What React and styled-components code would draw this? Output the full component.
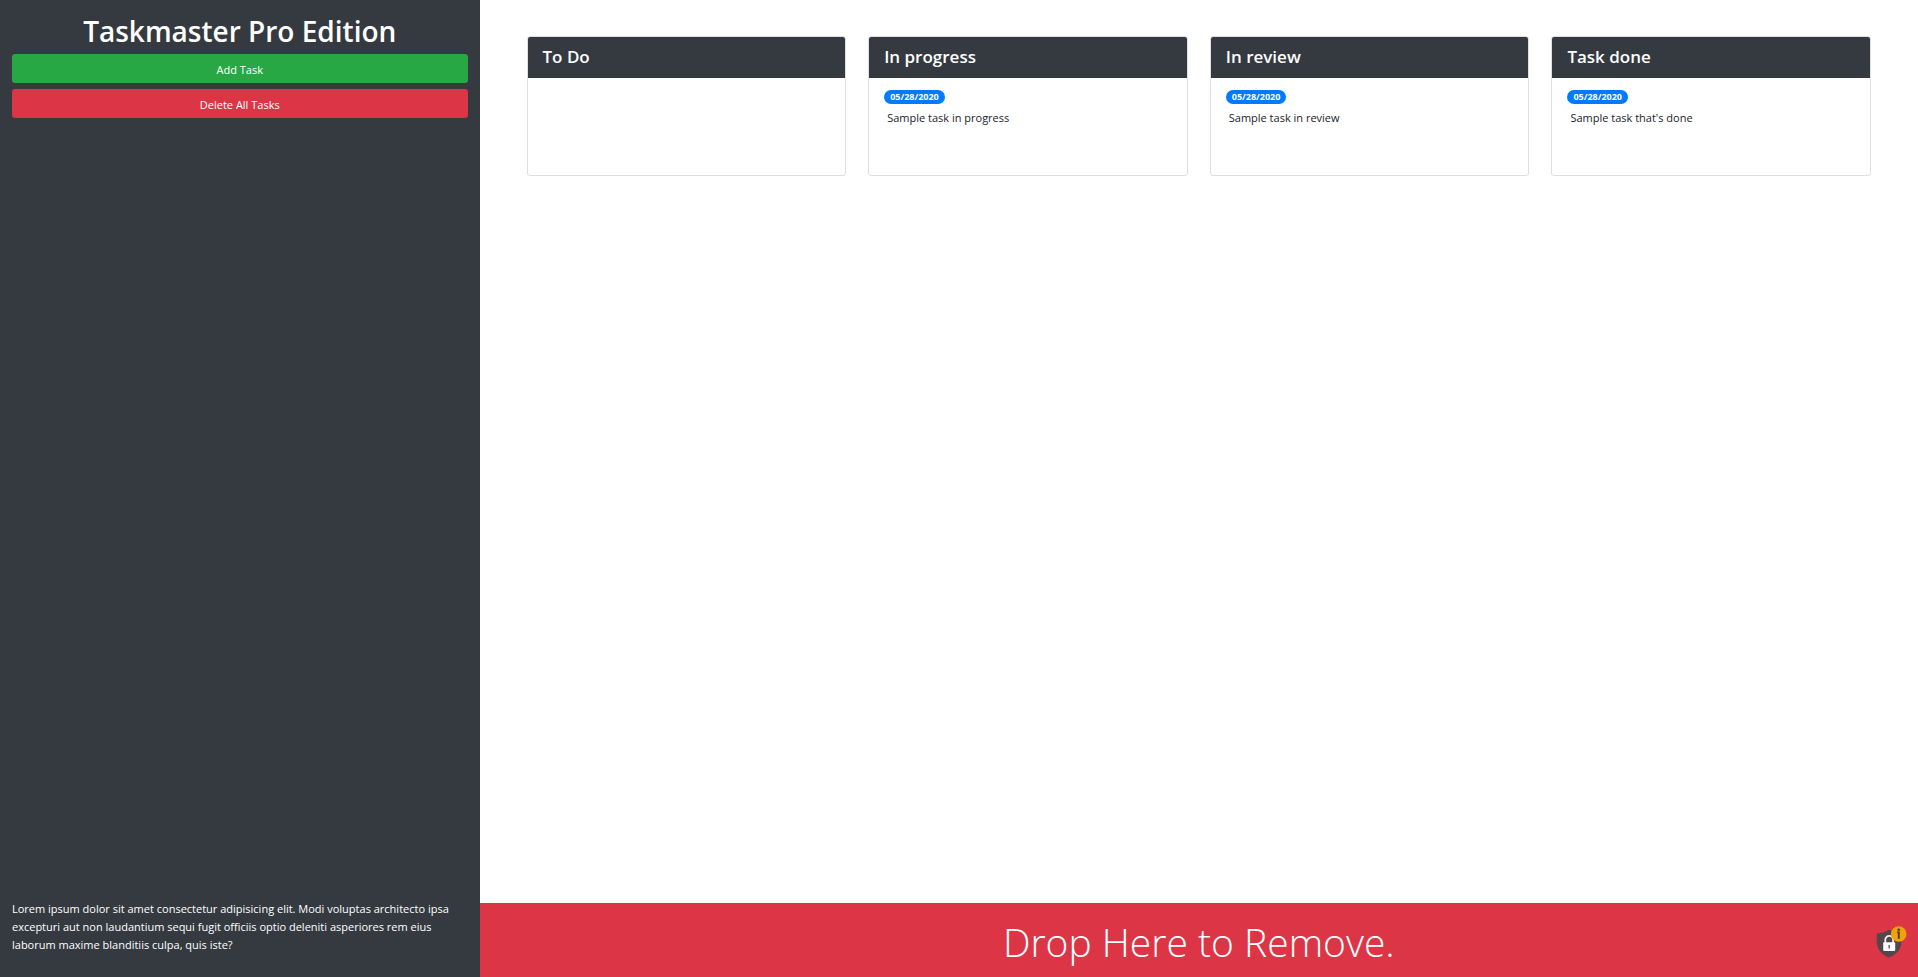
import React from "react";
import styled, { createGlobalStyle } from "styled-components";

const Global = createGlobalStyle`
  *, *::before, *::after { box-sizing: border-box; }
  body { margin: 0; background: #fff; color: #212529; font: 400 11px/18px "Open Sans", "Noto Sans", sans-serif; }
  h1, h2, p, ul { margin: 0; padding: 0; }
`;
const Page = styled.div`display: flex; min-height: 100vh;`;
const Sidebar = styled.aside`
  flex: 0 0 25%; display: flex; flex-direction: column; padding: 12px 12px 23px;
  background: #343a40; color: #fff;
`;
const Title = styled.h1`font-size: 28px; line-height: 38px; font-weight: 600; text-align: center; margin-bottom: 4px;`;
const Button = styled.button`
  height: 29px; margin-bottom: 6px; padding: 2px 6px 0; border: 0; border-radius: 3px;
  color: #fff; font: inherit; cursor: pointer;
  background: ${(p) => (p.$danger ? "#dc3545" : "#28a745")};
`;
const Note = styled.p`margin-top: auto;`;
const Main = styled.main`flex: 1; min-width: 0; display: flex; flex-direction: column;`;
const Board = styled.div`
  flex: 1; display: grid; grid-template-columns: repeat(4, minmax(0, 1fr)); align-items: start;
  gap: 22px; padding: 36px 47px;
`;
const Card = styled.section`border: 1px solid #dfdfdf; border-radius: 3px; overflow: hidden;`;
const CardTitle = styled.h2`
  background: #343a40; color: #fff; font-size: 17px; line-height: 24px; font-weight: 600; padding: 8px 15px 9px;
`;
const List = styled.ul`list-style: none; min-height: 97px;`;
const Task = styled.li`padding: 12px 15px;`;
const Badge = styled.time`
  display: block; width: fit-content; padding: 0 6px; border-radius: 7px; background: #007bff; color: #fff;
  font-size: 9px; line-height: 14px; font-weight: 700;
`;
const TaskText = styled.p`padding: 5px 3px 0;`;
const DropZone = styled.footer`
  padding-top: 4px; background: #dc3545; color: #fff; text-align: center;
  font-size: 39px; line-height: 70px; font-weight: 300;
`;
const ShieldButton = styled.button`
  position: fixed; right: 10px; bottom: 18px; width: 34px; height: 34px; padding: 0; border: 0;
  background: none; cursor: pointer;
  svg { display: block; }
`;

const columns = [
  { title: "To Do" },
  { title: "In progress", task: "Sample task in progress" },
  { title: "In review", task: "Sample task in review" },
  { title: "Task done", task: "Sample task that's done" },
];

function ShieldIcon() {
  return (
    <svg width="34" height="34" viewBox="0 0 34 34" aria-hidden="true">
      <path d="M15 4.5C11.5 7 7.5 8.2 2.8 8.4V16C2.8 24 7 29.5 15 32.5C23 29.5 27.5 24 27.5 16V8.4C22.5 8.2 18.5 7 15 4.5Z" fill="#54474b" />
      <path d="M11.3 18V14.8a3.9 3.9 0 0 1 7.8 0V18" fill="none" stroke="#f4eeee" strokeWidth="1.8" />
      <rect x="9.2" y="17.3" width="12" height="8.6" rx="0.8" fill="#fff" />
      <path d="M15.2 20v3.4" stroke="#75686b" strokeWidth="1.6" />
      <circle cx="24.7" cy="9" r="7.8" fill="#eea306" />
      <circle cx="24.7" cy="4.7" r="1.3" fill="#493522" />
      <path d="M23.2 7.4h1.6v6.4" fill="none" stroke="#493522" strokeWidth="1.8" />
    </svg>
  );
}

export default function App() {
  return (
    <Page>
      <Global />
      <Sidebar>
        <Title>Taskmaster Pro Edition</Title>
        <Button>Add Task</Button>
        <Button $danger>Delete All Tasks</Button>
        <Note>Lorem ipsum dolor sit amet consectetur adipisicing elit. Modi voluptas architecto ipsa excepturi aut non laudantium sequi fugit officiis optio deleniti asperiores rem eius laborum maxime blanditiis culpa, quis iste?</Note>
      </Sidebar>
      <Main>
        <Board>
          {columns.map((c) => (
            <Card key={c.title}>
              <CardTitle>{c.title}</CardTitle>
              <List>
                {c.task && (
                  <Task>
                    <Badge dateTime="2020-05-28">05/28/2020</Badge>
                    <TaskText>{c.task}</TaskText>
                  </Task>
                )}
              </List>
            </Card>
          ))}
        </Board>
        <DropZone>Drop Here to Remove.</DropZone>
      </Main>
      <ShieldButton aria-label="Security information">
        <ShieldIcon />
      </ShieldButton>
    </Page>
  );
}
